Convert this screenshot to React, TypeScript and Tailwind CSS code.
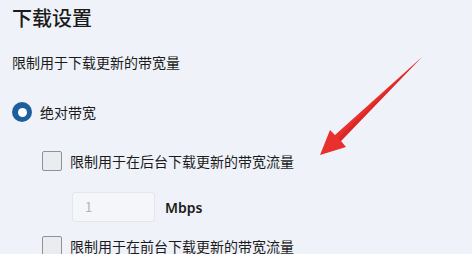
import React from "react";

const font = { fontFamily: '"Noto Sans CJK SC", "Noto Sans", sans-serif' };

function Checkbox() {
  return <div className="w-[20px] h-[20px] shrink-0 rounded-[2px] border border-[#8f9296] bg-[#eaecf0]" />;
}

export default function App() {
  return (
    <div className="relative w-[472px] h-[254px] overflow-hidden bg-[#eff2f8] text-[#1b1b1b]" style={font}>
      <div className="flex flex-col pl-[12px] pt-[4px]">
        <div className="h-[28px] leading-[28px] text-[20px] font-medium">下载设置</div>
        <div className="mt-[20px] h-[20px] leading-[20px] text-[14px]">限制用于下载更新的带宽量</div>
        <div className="mt-[30px] flex items-center gap-[8px] h-[20px]">
          <div className="w-[20px] h-[20px] rounded-full bg-[#1d5f9d] flex items-center justify-center">
            <div className="w-[9px] h-[9px] rounded-full bg-white" />
          </div>
          <span className="text-[14px] leading-[20px]">绝对带宽</span>
        </div>
        <div className="mt-[29px] pl-[30px] flex items-center gap-[8px] h-[20px]">
          <Checkbox />
          <span className="text-[14px] leading-[20px]">限制用于在后台下载更新的带宽流量</span>
        </div>
        <div className="mt-[21px] pl-[60px] flex items-center gap-[10px] h-[30px]">
          <div className="w-[83px] h-[30px] rounded-[3px] border border-[#e4e6ea] bg-[#f5f6f9] flex items-center pl-[12px] text-[13px] text-[#b0b3b8]">
            1
          </div>
          <span className="text-[14px] font-semibold text-[#1b1b1b]" style={{ fontFamily: '"Noto Sans", sans-serif' }}>Mbps</span>
        </div>
        <div className="mt-[14px] pl-[30px] flex items-center gap-[8px] h-[20px]">
          <Checkbox />
          <span className="text-[14px] leading-[20px]">限制用于在前台下载更新的带宽流量</span>
        </div>
      </div>
      <svg className="absolute left-0 top-0" width="472" height="254" viewBox="0 0 472 254">
        <polygon
          points="422,57 341,141 346,147 320,155 330,130 335,135"
          fill="#e8302c"
        />
        <polygon points="422,57 338,138 341,141" fill="#c9201f" opacity="0.5" />
      </svg>
    </div>
  );
}
